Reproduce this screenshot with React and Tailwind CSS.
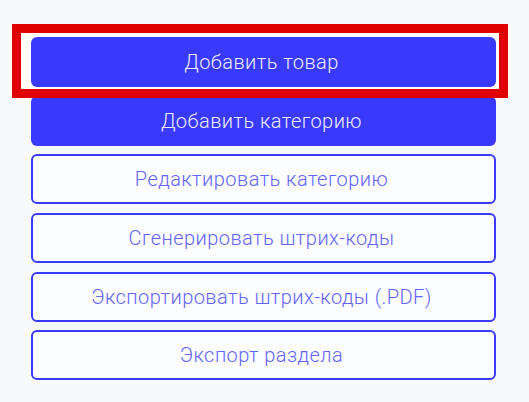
const filled = [
  "Добавить товар",
  "Добавить категорию",
];

const outlined = [
  "Редактировать категорию",
  "Сгенерировать штрих-коды",
  "Экспортировать штрих-коды (.PDF)",
  "Экспорт раздела",
];

const font = { fontFamily: "Roboto, 'Noto Sans', sans-serif" };

export default function App() {
  return (
    <div className="min-h-[402px] w-full bg-[#f8f9fb]" style={font}>
      <div className="relative flex w-[465px] flex-col gap-[8.67px] pl-0 pt-[37px] ml-[31px]">
        {/* selection highlight around the first action */}
        <div className="pointer-events-none absolute left-[-19px] top-[24px] z-10 h-[74px] w-[496px] border-[9px] border-[#e00000] bg-white" />
        {filled.map((label, i) => (
          <button
            key={label}
            className={
              "flex h-[50px] w-full items-center justify-center rounded-[6px] bg-[#3a3aff] pr-[4px] text-[20px] font-light tracking-[0.45px] text-[#ececff] " +
              (i === 0 ? "relative z-20" : "relative z-0")
            }
          >
            {label}
          </button>
        ))}
        {outlined.map((label) => (
          <button
            key={label}
            className="flex h-[50px] w-full items-center justify-center rounded-[6px] border-2 border-[#3a3aff] bg-[#fcfdff] pr-[4px] text-[20px] font-light tracking-[0.45px] text-[#6464ff]"
          >
            {label}
          </button>
        ))}
      </div>
    </div>
  );
}
